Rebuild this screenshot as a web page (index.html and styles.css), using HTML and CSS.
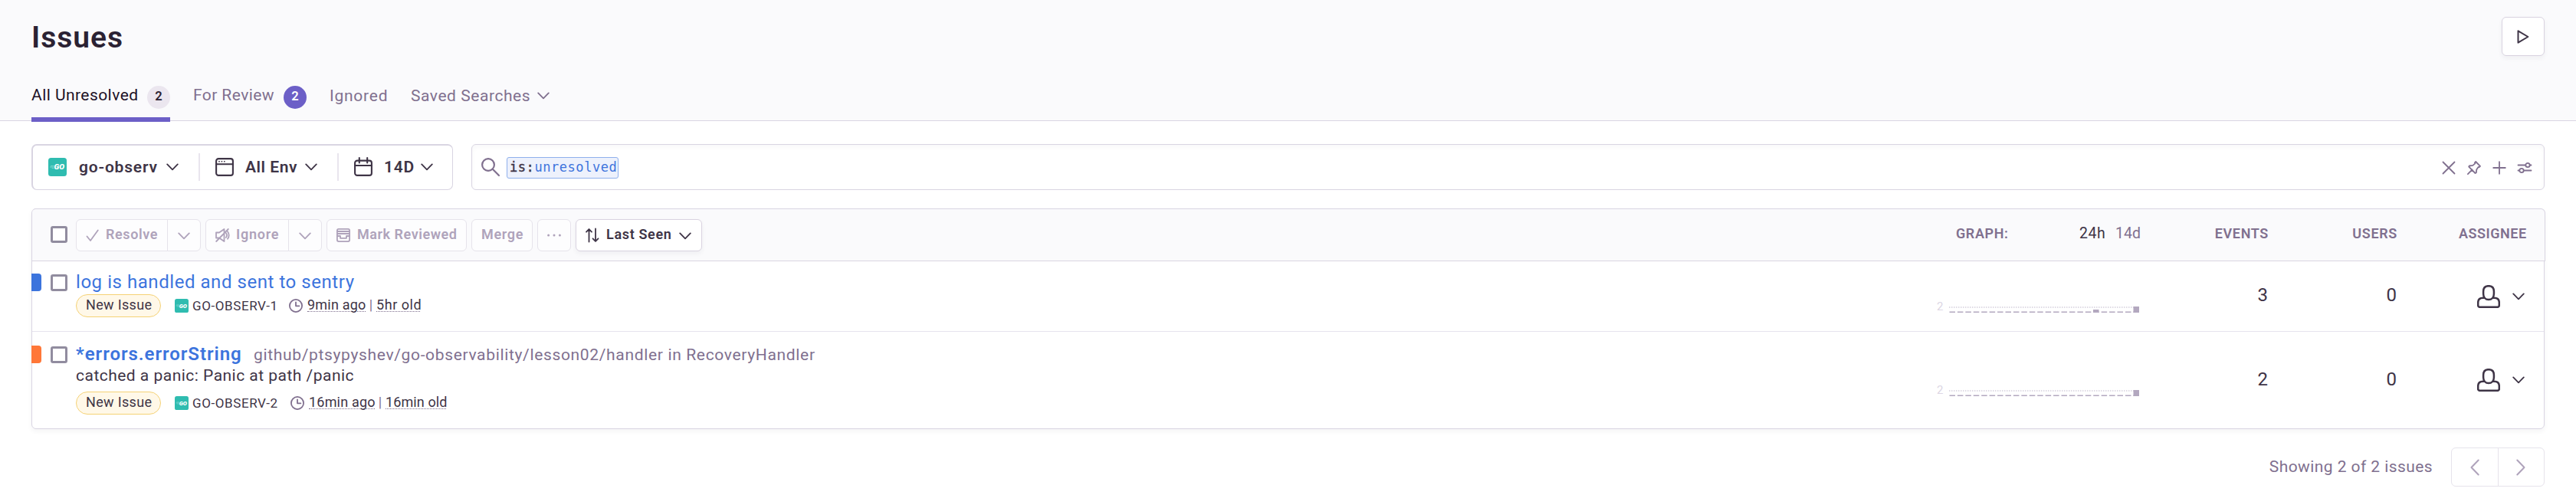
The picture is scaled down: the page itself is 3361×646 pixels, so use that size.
FILE: index.html
```html
<!DOCTYPE html>
<html lang="en">
<head>
<meta charset="utf-8">
<title>Issues</title>
<link rel="stylesheet" href="styles.css">
</head>
<body>
<svg class="defs" aria-hidden="true">
  <symbol id="chevron" viewBox="0 0 16 10"><path d="M1.2 1.4 8 8.4l6.800-7"/></symbol>
  <symbol id="golang" viewBox="0 0 24 24">
    <rect class="go-bg" width="24" height="24" rx="3.500"/>
    <path class="go-speed" d="M3.500 10.500h4M2.500 12h4.500M5 13.500h2"/>
    <text class="go-text" x="7.500" y="15.400" textLength="13.500" lengthAdjust="spacingAndGlyphs">GO</text>
  </symbol>
  <symbol id="clock" viewBox="0 0 18 18"><circle cx="9" cy="9" r="8.100"/><path d="M9 4.300V9.300h4.400"/></symbol>
  <symbol id="person" viewBox="0 0 30 30">
    <path d="M15 1.200c-4.500 0-6.900 2.700-6.900 7v3.200c0 4.400 2.800 7.600 6.900 7.600s6.900-3.200 6.900-7.600V8.200c0-4.300-2.400-7-6.900-7z"/>
    <path d="M9.200 16.800H7.700c-4 0-6.500 2.200-6.500 6v3.700c0 1.500.7 2.300 2.200 2.300h23.200c1.500 0 2.200-.8 2.200-2.300v-3.700c0-3.800-2.500-6-6.500-6h-1.500"/>
  </symbol>
</svg>

<header class="page-header">
  <div class="title-row">
    <h1>Issues</h1>
    <button class="play"><svg viewBox="0 0 16 18"><path d="M1.500 1.300v15.400L14.400 9z"/></svg></button>
  </div>
  <nav class="tabs">
    <a class="tab active"><span class="tab-all">All Unresolved</span><b class="badge">2</b></a>
    <a class="tab"><span class="tab-review">For Review</span><b class="badge purple">2</b></a>
    <a class="tab low tab-ignored">Ignored</a>
    <a class="tab low"><span class="tab-saved">Saved Searches</span><svg class="chev"><use href="#chevron"/></svg></a>
  </nav>
</header>

<main>
  <div class="filters">
    <div class="page-filters">
      <svg class="f-icon"><use href="#golang"/></svg>
      <span class="f-project">go-observ</span>
      <svg class="chev"><use href="#chevron"/></svg>
      <i class="f-divider"></i>
      <svg class="f-icon line" viewBox="0 0 24 24"><rect x="1.100" y="1.100" width="21.800" height="21.800" rx="3"/><path d="M1 8.200h22"/><path class="dots" d="M4.200 4.700h1.600M7.600 4.700h1.600M11 4.700h1.600"/></svg>
      <span class="f-env">All Env</span>
      <svg class="chev"><use href="#chevron"/></svg>
      <i class="f-divider"></i>
      <svg class="f-icon line" viewBox="0 0 24 24"><rect x="1.100" y="3.600" width="21.800" height="19.300" rx="3"/><path d="M1 10h22M6.800 0v6.500M17.200 0v6.500"/></svg>
      <span class="f-date">14D</span>
      <svg class="chev"><use href="#chevron"/></svg>
    </div>
    <div class="search">
      <svg class="search-icon" viewBox="0 0 24 24"><circle cx="9" cy="9" r="7.900"/><path d="M14.800 14.800 23 23"/></svg>
      <span class="token"><b>is:</b><span>unresolved</span></span>
      <div class="search-actions">
        <svg viewBox="0 0 18 18"><path d="M1.500 1.500l15 15M16.500 1.500l-15 15"/></svg>
        <svg viewBox="0 0 18 18"><path d="M.9 17.200 6.600 11.400M11.200 1 17 6.800l-1.300 1.400-1.100-.2-2.300 3.200-.5 4.300-1.300.5L2.200 7.700l.6-1.200 4.500-.6 3.100-2.500-.5-1.100z"/></svg>
        <svg viewBox="0 0 18 18"><path d="M9 1.200v15.600M1.200 9h15.600"/></svg>
        <svg viewBox="0 0 18 18"><path d="M.5 5.500h9.700M15.800 5.500h1.700M.5 12.500h1.700M7.800 12.500h9.700"/><circle cx="13" cy="5.500" r="2.700"/><circle cx="5" cy="12.500" r="2.700"/></svg>
      </div>
    </div>
  </div>

  <section class="panel">
    <div class="panel-head">
      <span class="checkbox"></span>
      <div class="btn disabled resolve">
        <svg viewBox="0 0 18 18"><path d="M1.500 10.500 6 16 15.800 2.500"/></svg><span>Resolve</span>
        <i></i><svg class="chev"><use href="#chevron"/></svg>
      </div>
      <div class="btn disabled ignore">
        <svg viewBox="0 0 18 18"><path d="M1 5.500h4L11.500 1v16L5 12.500H1zM1.200 17 16.800 1M13.800 6c1.400 1.700 1.400 4.300 0 6M16 4.200c2 2.800 2 6.800 0 9.600"/></svg><span>Ignore</span>
        <i></i><svg class="chev"><use href="#chevron"/></svg>
      </div>
      <div class="btn disabled reviewed">
        <svg viewBox="0 0 18 18"><rect x=".9" y=".9" width="16.200" height="16.200" rx="2"/><path d="M1 4h16M1 7h16M1 10h4v2.800h8V10h4"/></svg><span>Mark Reviewed</span>
      </div>
      <div class="btn disabled merge"><span>Merge</span></div>
      <div class="btn disabled more"><svg viewBox="0 0 18 18"><circle cx="1.600" cy="9" r="1.500"/><circle cx="9" cy="9" r="1.500"/><circle cx="16.400" cy="9" r="1.500"/></svg></div>
      <div class="btn sort">
        <svg viewBox="0 0 18 18"><path d="M4.500 17.500V1.200M1 4.700l3.500-3.700L8 4.700M13 .5v16.300M9.500 13.300l3.500 3.700 3.500-3.700"/></svg><span>Last Seen</span>
        <svg class="chev"><use href="#chevron"/></svg>
      </div>
      <div class="columns head-columns">
        <div class="graph-head"><b>GRAPH:</b><span class="on">24h</span><span>14d</span></div>
        <b class="h-events">EVENTS</b>
        <b class="h-users">USERS</b>
        <b class="h-assignee">ASSIGNEE</b>
      </div>
    </div>

    <article class="issue first">
      <i class="level info"></i>
      <span class="checkbox"></span>
      <div class="details">
        <a class="name log">log is handled and sent to sentry</a>
        <div class="meta">
          <span class="tag">New Issue</span>
          <svg class="m-icon"><use href="#golang"/></svg>
          <span class="short-id">GO-OBSERV-1</span>
          <svg class="clock"><use href="#clock"/></svg>
          <span class="time t9">9min ago</span><span class="bar">|</span><span class="time t5">5hr old</span>
        </div>
      </div>
      <div class="columns">
        <div class="graph"><span>2</span>
          <svg viewBox="0 0 248 8"><path class="mark" d="M0 1h248"/><path class="base-soft" d="M.5 6.500h247.500"/><path class="base" d="M.5 7.500h247.500"/><path class="fill" d="M188 4h7.500v4H188zM240.500 0h7.500v8h-7.500z"/></svg>
        </div>
        <span class="count">3</span>
        <span class="count">0</span>
        <div class="assignee"><svg class="person"><use href="#person"/></svg><svg class="chev"><use href="#chevron"/></svg></div>
      </div>
    </article>

    <article class="issue second">
      <i class="level error"></i>
      <span class="checkbox"></span>
      <div class="details">
        <div class="heading"><a class="name err">*errors.errorString</a><span class="culprit">github/ptsypyshev/go-observability/lesson02/handler in RecoveryHandler</span></div>
        <div class="message">catched a panic: Panic at path /panic</div>
        <div class="meta">
          <span class="tag">New Issue</span>
          <svg class="m-icon"><use href="#golang"/></svg>
          <span class="short-id wide">GO-OBSERV-2</span>
          <svg class="clock"><use href="#clock"/></svg>
          <span class="time t16">16min ago</span><span class="bar">|</span><span class="time t16o">16min old</span>
        </div>
      </div>
      <div class="columns">
        <div class="graph"><span>2</span>
          <svg viewBox="0 0 248 8"><path class="mark" d="M0 1h248"/><path class="base-soft" d="M.5 6.500h247.500"/><path class="base" d="M.5 7.500h247.500"/><path class="fill" d="M240.500 0h7.500v8h-7.500z"/></svg>
        </div>
        <span class="count">2</span>
        <span class="count">0</span>
        <div class="assignee"><svg class="person"><use href="#person"/></svg><svg class="chev"><use href="#chevron"/></svg></div>
      </div>
    </article>
  </section>

  <footer class="pagination">
    <span>Showing 2 of 2 issues</span>
    <div class="pager">
      <button><svg viewBox="0 0 12 22"><path d="M10.700 1.500 1.500 11l9.200 9.500"/></svg></button>
      <button><svg viewBox="0 0 12 22"><path d="M1.300 1.500 10.500 11l-9.200 9.500"/></svg></button>
    </div>
  </footer>
</main>
</body>
</html>
```
FILE: styles.css
```css
* { box-sizing: border-box; }
body {
  margin: 0;
  background: #fff;
  color: #3e3446;
  font: 400 21px/24px Roboto, "Liberation Sans", sans-serif;
  white-space: nowrap;
}
svg { display: block; flex: none; fill: none; stroke: currentColor; stroke-width: 1.8; stroke-linecap: round; stroke-linejoin: round; overflow: visible; }
button { padding: 0; font: inherit; color: inherit; }
.defs { position: absolute; width: 0; height: 0; }
.chev { width: 16px; height: 10px; }
.go-bg { fill: #2fbcb0; stroke: none; }
.go-speed { stroke: #a5e2dc; stroke-width: .6; }
.go-text { fill: #fff; stroke: none; font: italic 900 9.500px Roboto, sans-serif; letter-spacing: 0; }

/* header */
.page-header { height: 158px; padding: 22px 41px 0; background: #fafafc; border-bottom: 1px solid #d9d5e2; }
.title-row { display: flex; justify-content: space-between; height: 51px; }
h1 { margin: 0; font-size: 39px; font-weight: 600; line-height: 55px; letter-spacing: .97px; color: #2b2233; }
.play { width: 56px; height: 51px; display: flex; align-items: center; justify-content: center; background: #fff; border: 1px solid #d9d3e0; border-radius: 6px; box-shadow: 0 3px 6px rgba(43, 34, 51, .05); }
.play svg { width: 16px; height: 18px; stroke-width: 2; }
.tabs { display: flex; gap: 30px; height: 84px; }
.tab { position: relative; display: flex; line-height: 102px; height: 84px; color: #80708f; }
.tab.active { color: #1d1127; }
.tab.active::after { content: ""; position: absolute; left: 0; right: 0; bottom: -2px; height: 6px; background: #6c5fc7; }
.tab.low { line-height: 104px; }
.tab-all { width: 151px; letter-spacing: .44px; }
.tab-review { width: 118px; letter-spacing: .42px; }
.tab-ignored { width: 76px; letter-spacing: .75px; }
.tab-saved { width: 165px; letter-spacing: .55px; }
.tab .chev { margin-top: 47px; }
.badge { width: 30px; height: 30px; margin-top: 39px; border-radius: 50%; background: #ebe6ef; color: #2b2233; font-size: 16.500px; font-weight: 600; line-height: 27px; text-align: center; }
.badge.purple { background: #6c5fc7; color: #fff; }

/* filter bar */
.filters { display: flex; gap: 24px; height: 60px; margin: 30px 41px 24px; }
.page-filters { width: 550px; display: flex; align-items: center; padding-left: 20px; border: 1px solid #d9d5e2; border-width: 2px 1px 1px 2px; border-radius: 7px; font-weight: 600; }
.page-filters > * { position: relative; top: -.5px; }
.page-filters .chev { margin-top: -1px; }
.f-icon { width: 24px; height: 24px; }
.f-icon.line { stroke-width: 2.100; }
.f-icon .dots { stroke-width: 1.600; stroke-linecap: butt; }
.f-project { width: 130px; padding-left: 16px; letter-spacing: .8px; }
.f-env { width: 93px; padding-left: 15px; letter-spacing: .55px; }
.f-date { width: 63px; padding-left: 15px; letter-spacing: .8px; }
.f-divider { width: 2px; height: 36px; margin: 0 20px 0 26px; background: #e9e5ee; }
.search { flex: 1; display: flex; align-items: center; padding: 0 16px 0 12px; border: 1px solid #d9d5e2; border-radius: 6px; box-shadow: inset 0 3px 6px rgba(43, 34, 51, .03); color: #80708f; }
.search-icon { width: 24px; height: 24px; stroke-width: 2.200; }
.token { width: 146px; height: 28px; margin: 2px 0 0 9px; padding-left: 3px; border: 1px solid #8fb0ec; border-radius: 3px; background: #edf1fc; color: #3e74dd; font: 17px/24px "DejaVu Sans Mono", monospace; letter-spacing: .56px; }
.token b { font-weight: 400; color: #3e3446; -webkit-text-stroke: .4px #3e3446; }
.search-actions { display: flex; gap: 15px; margin: 1px 0 0 auto; }
.search-actions svg { width: 18px; height: 18px; }

/* issue panel */
.panel { width: 3279px; height: 288px; margin-left: 41px; border: 1px solid #d9d5e2; border-radius: 6px; box-shadow: 0 3px 6px rgba(43, 34, 51, .05); }
.panel-head { width: 3279px; height: 69px; margin-top: -1px; padding-top: 13px; display: flex; align-items: flex-start; background: #fafafc; border: 1px solid #d9d5e2; border-left: 0; border-radius: 5px 6px 0 0; }
.checkbox { flex: none; width: 22px; height: 22px; border: 3px solid #918c9f; border-radius: 3px; background: #fff; }
.panel-head .checkbox { margin: 9px 11px 0 24px; }
.btn { position: relative; height: 42px; margin-right: 6px; display: flex; align-items: center; border: 1px solid #d9d3e0; border-radius: 6px; background: #fff; font-size: 18px; font-weight: 600; line-height: 38px; }
.btn span { height: 40px; }
.btn svg:first-child { width: 18px; height: 18px; }
.btn.disabled { color: #afa3bb; border-color: #e6e3eb; background: #fdfdfe; }
.btn i { align-self: stretch; width: 1px; margin-right: 13px; background: #e6e3eb; }
.resolve { width: 163px; padding-left: 12px; }
.resolve span { width: 88px; padding-left: 8px; letter-spacing: .62px; }
.ignore { width: 152px; padding-left: 12px; }
.ignore span { width: 77px; padding-left: 9px; letter-spacing: .78px; }
.reviewed { width: 183px; padding-left: 12px; }
.reviewed span { padding-left: 9px; letter-spacing: .55px; }
.merge { width: 80px; padding-left: 12px; letter-spacing: .7px; }
.more { width: 44px; justify-content: center; }
.more svg { fill: currentColor; stroke: none; }
.sort { width: 165px; padding-left: 12px; box-shadow: 0 3px 6px rgba(43, 34, 51, .05); }
.sort span { width: 104px; padding-left: 9px; letter-spacing: .66px; }
.btn.disabled .chev, .sort .chev { margin-top: 1px; }

.columns { flex: none; width: 800px; height: 100%; margin-left: auto; display: grid; grid-template-columns: 272px 168px 168px 192px; align-items: center; }
.head-columns { height: 38px; font-size: 18px; line-height: 38px; color: #80708f; }
.head-columns b { font-weight: 600; }
.graph-head { display: grid; grid-template-columns: 161px 47px auto; padding-left: 32px; font-size: 19.500px; }
.graph-head b { font-size: 18px; letter-spacing: .6px; }
.graph-head .on { color: #3e3446; letter-spacing: .6px; }
.h-events, .h-users { justify-self: end; letter-spacing: .65px; }
.h-assignee { padding-left: 80px; letter-spacing: .53px; }

.issue { display: flex; align-items: flex-start; }
.first { height: 92px; padding-top: 11px; border-bottom: 1px solid #e6e3ee; }
.second { height: 126px; padding-top: 13px; }
.first .columns { height: 91px; margin-top: -11px; }
.second .columns { height: 126px; margin-top: -13px; }
.level { width: 13px; height: 23px; margin: 5px 12px 0 -1px; border-radius: 0 4px 4px 0; }
.info { background: #3c74dd; }
.error { background: #ff7738; }
.issue .checkbox { margin: 6px 11px 0 0; }
.name { display: block; font-size: 24px; line-height: 32px; color: #3c74dd; }
.log { letter-spacing: .55px; }
.heading { display: flex; height: 32px; }
.err { width: 232px; font-weight: 600; letter-spacing: .94px; }
.culprit { line-height: 34px; letter-spacing: .66px; color: #80708f; }
.message { line-height: 24px; letter-spacing: .48px; margin-bottom: 9px; }
.meta { display: flex; align-items: flex-start; height: 30px; font-size: 18px; }
.tag { width: 111px; height: 30px; margin-right: 18px; padding-left: 12px; border: 1px solid #f5d275; border-radius: 15px; background: #fff8e8; line-height: 25px; letter-spacing: .34px; }
.m-icon { width: 18px; height: 18px; margin: 6px 5px 0 0; }
.short-id { width: 126px; font-size: 17px; line-height: 31px; letter-spacing: .59px; }
.short-id.wide { width: 128px; }
.clock { width: 18px; height: 18px; margin: 6px 6px 0 0; color: #80708f; }
.time { height: 18px; margin-top: 5px; line-height: 17px; border-bottom: 1px dotted #80708f; }
.t9 { width: 76px; letter-spacing: .2px; }
.t5 { width: 57px; letter-spacing: .55px; }
.t16 { width: 86px; letter-spacing: .2px; }
.t16o { width: 79px; letter-spacing: .1px; }
.bar { width: 14px; line-height: 27px; text-align: center; color: #80708f; }

.graph { display: flex; align-items: flex-end; height: 42px; padding-left: 8px; }
.graph span { width: 16px; margin-bottom: -2px; font-size: 15px; line-height: 20px; color: #dcd6e4; }
.graph svg { width: 248px; height: 8px; stroke-linecap: butt; stroke-width: 1; }
.mark { stroke: #d5cfdd; stroke-width: 1.500; stroke-dasharray: 1.500 1.500; }
.base, .base-soft { stroke: #b3a8bf; stroke-dasharray: 7.500 2.930; }
.base-soft { stroke-opacity: .5; }
.fill { fill: #b3a8bf; stroke: none; }
.count { justify-self: end; padding-bottom: 3px; font-size: 24px; line-height: 30px; }
.assignee { display: flex; align-items: center; padding-left: 105px; }
.person { width: 30px; height: 30px; margin-right: 16px; stroke-width: 2.500; }

/* pagination */
.pagination { display: flex; justify-content: flex-end; gap: 24px; height: 51px; margin: 24px 41px 0; color: #80708f; line-height: 50px; letter-spacing: .42px; }
.pager { display: flex; width: 122px; border: 1px solid #e6e3eb; border-radius: 6px; color: #afa3bb; }
.pager button { flex: 1; display: flex; align-items: center; justify-content: center; border: 0; background: none; }
.pager button + button { border-left: 1px solid #e6e3eb; }
.pager svg { width: 12px; height: 22px; stroke-width: 2; }
```
